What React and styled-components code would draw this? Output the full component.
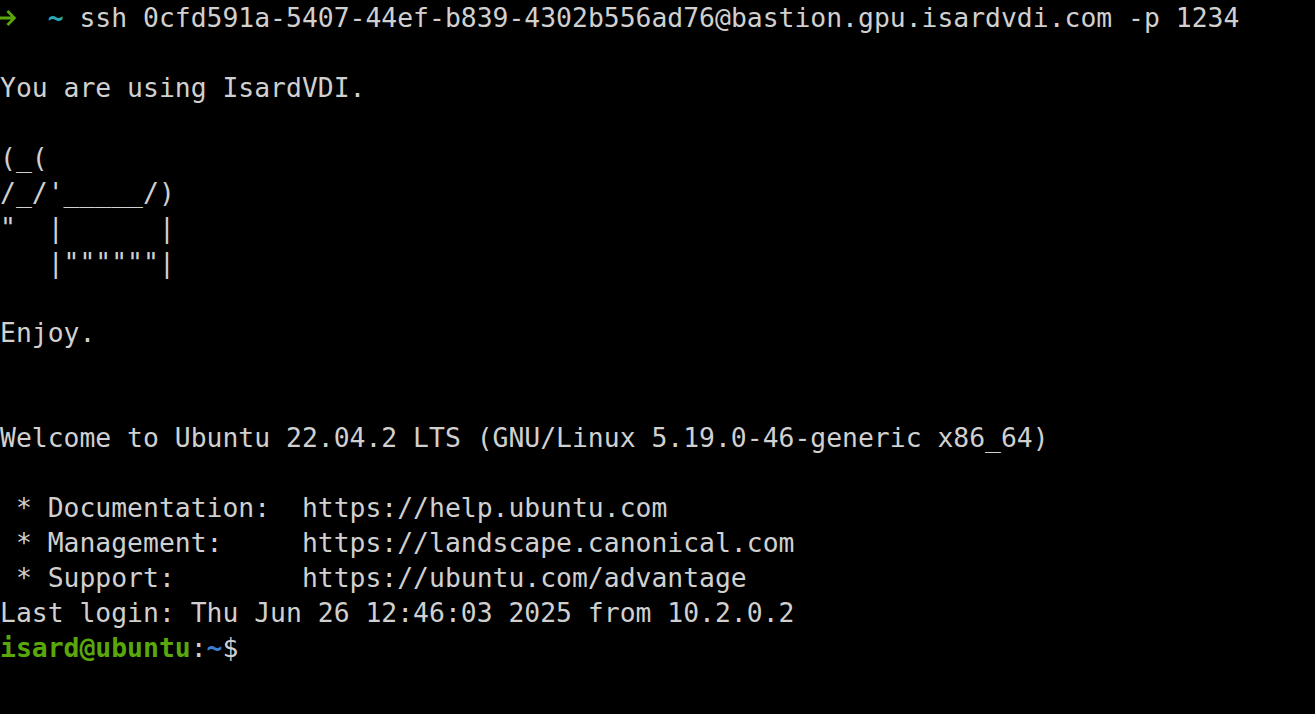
import styled, { createGlobalStyle } from "styled-components";

const GlobalStyle = createGlobalStyle`
  html, body {
    margin: 0;
    padding: 0;
    background: #000;
  }
`;

const Screen = styled.div`
  width: 1315px;
  height: 714px;
  overflow: hidden;
  background: #000;
  font-family: "DejaVu Sans Mono", "Liberation Mono", monospace;
  font-size: 26.4px;
  line-height: 35px;
  color: #d0d0d0;
`;

const Line = styled.div`
  height: 35px;
  white-space: pre;
`;

const Tint = styled.span`
  color: ${(p) => p.$color};
  font-weight: ${(p) => (p.$bold ? 700 : 400)};
`;

const ArrowCell = styled.svg`
  display: inline-block;
  width: 15.9px;
  height: 35px;
  vertical-align: top;
`;

const COLORS = {
  green: "#5aa70c",
  teal: "#2aa8b8",
  blue: "#3c7fd0",
};

// zsh "robbyrussell" prompt arrow
const Arrow = () => (
  <ArrowCell viewBox="0 0 16 35">
    <path
      d="M1 18 H14 M8.5 12 L14.5 18 L8.5 24"
      fill="none"
      stroke={COLORS.green}
      strokeWidth="2.8"
      strokeLinecap="square"
    />
  </ArrowCell>
);

const lines = [
  null,
  "",
  "You are using IsardVDI.",
  "",
  "(_(",
  "/_/'_____/)",
  '"  |      |',
  '   |""""""|',
  "",
  "Enjoy.",
  "",
  "",
  "Welcome to Ubuntu 22.04.2 LTS (GNU/Linux 5.19.0-46-generic x86_64)",
  "",
  " * Documentation:  https://help.ubuntu.com",
  " * Management:     https://landscape.canonical.com",
  " * Support:        https://ubuntu.com/advantage",
  "Last login: Thu Jun 26 12:46:03 2025 from 10.2.0.2",
];

const App = () => (
  <>
    <GlobalStyle />
    <Screen>
      {lines.map((text, i) =>
        text === null ? (
          <Line key={i}>
            <Arrow />
            {"  "}
            <Tint $color={COLORS.teal} $bold>
              ~
            </Tint>
            {" ssh 0cfd591a-5407-44ef-b839-4302b556ad76@bastion.gpu.isardvdi.com -p 1234"}
          </Line>
        ) : (
          <Line key={i}>{text}</Line>
        )
      )}
      <Line>
        <Tint $color={COLORS.green} $bold>
          isard@ubuntu
        </Tint>
        :
        <Tint $color={COLORS.blue} $bold>
          ~
        </Tint>
        $
      </Line>
    </Screen>
  </>
);

export default App;
